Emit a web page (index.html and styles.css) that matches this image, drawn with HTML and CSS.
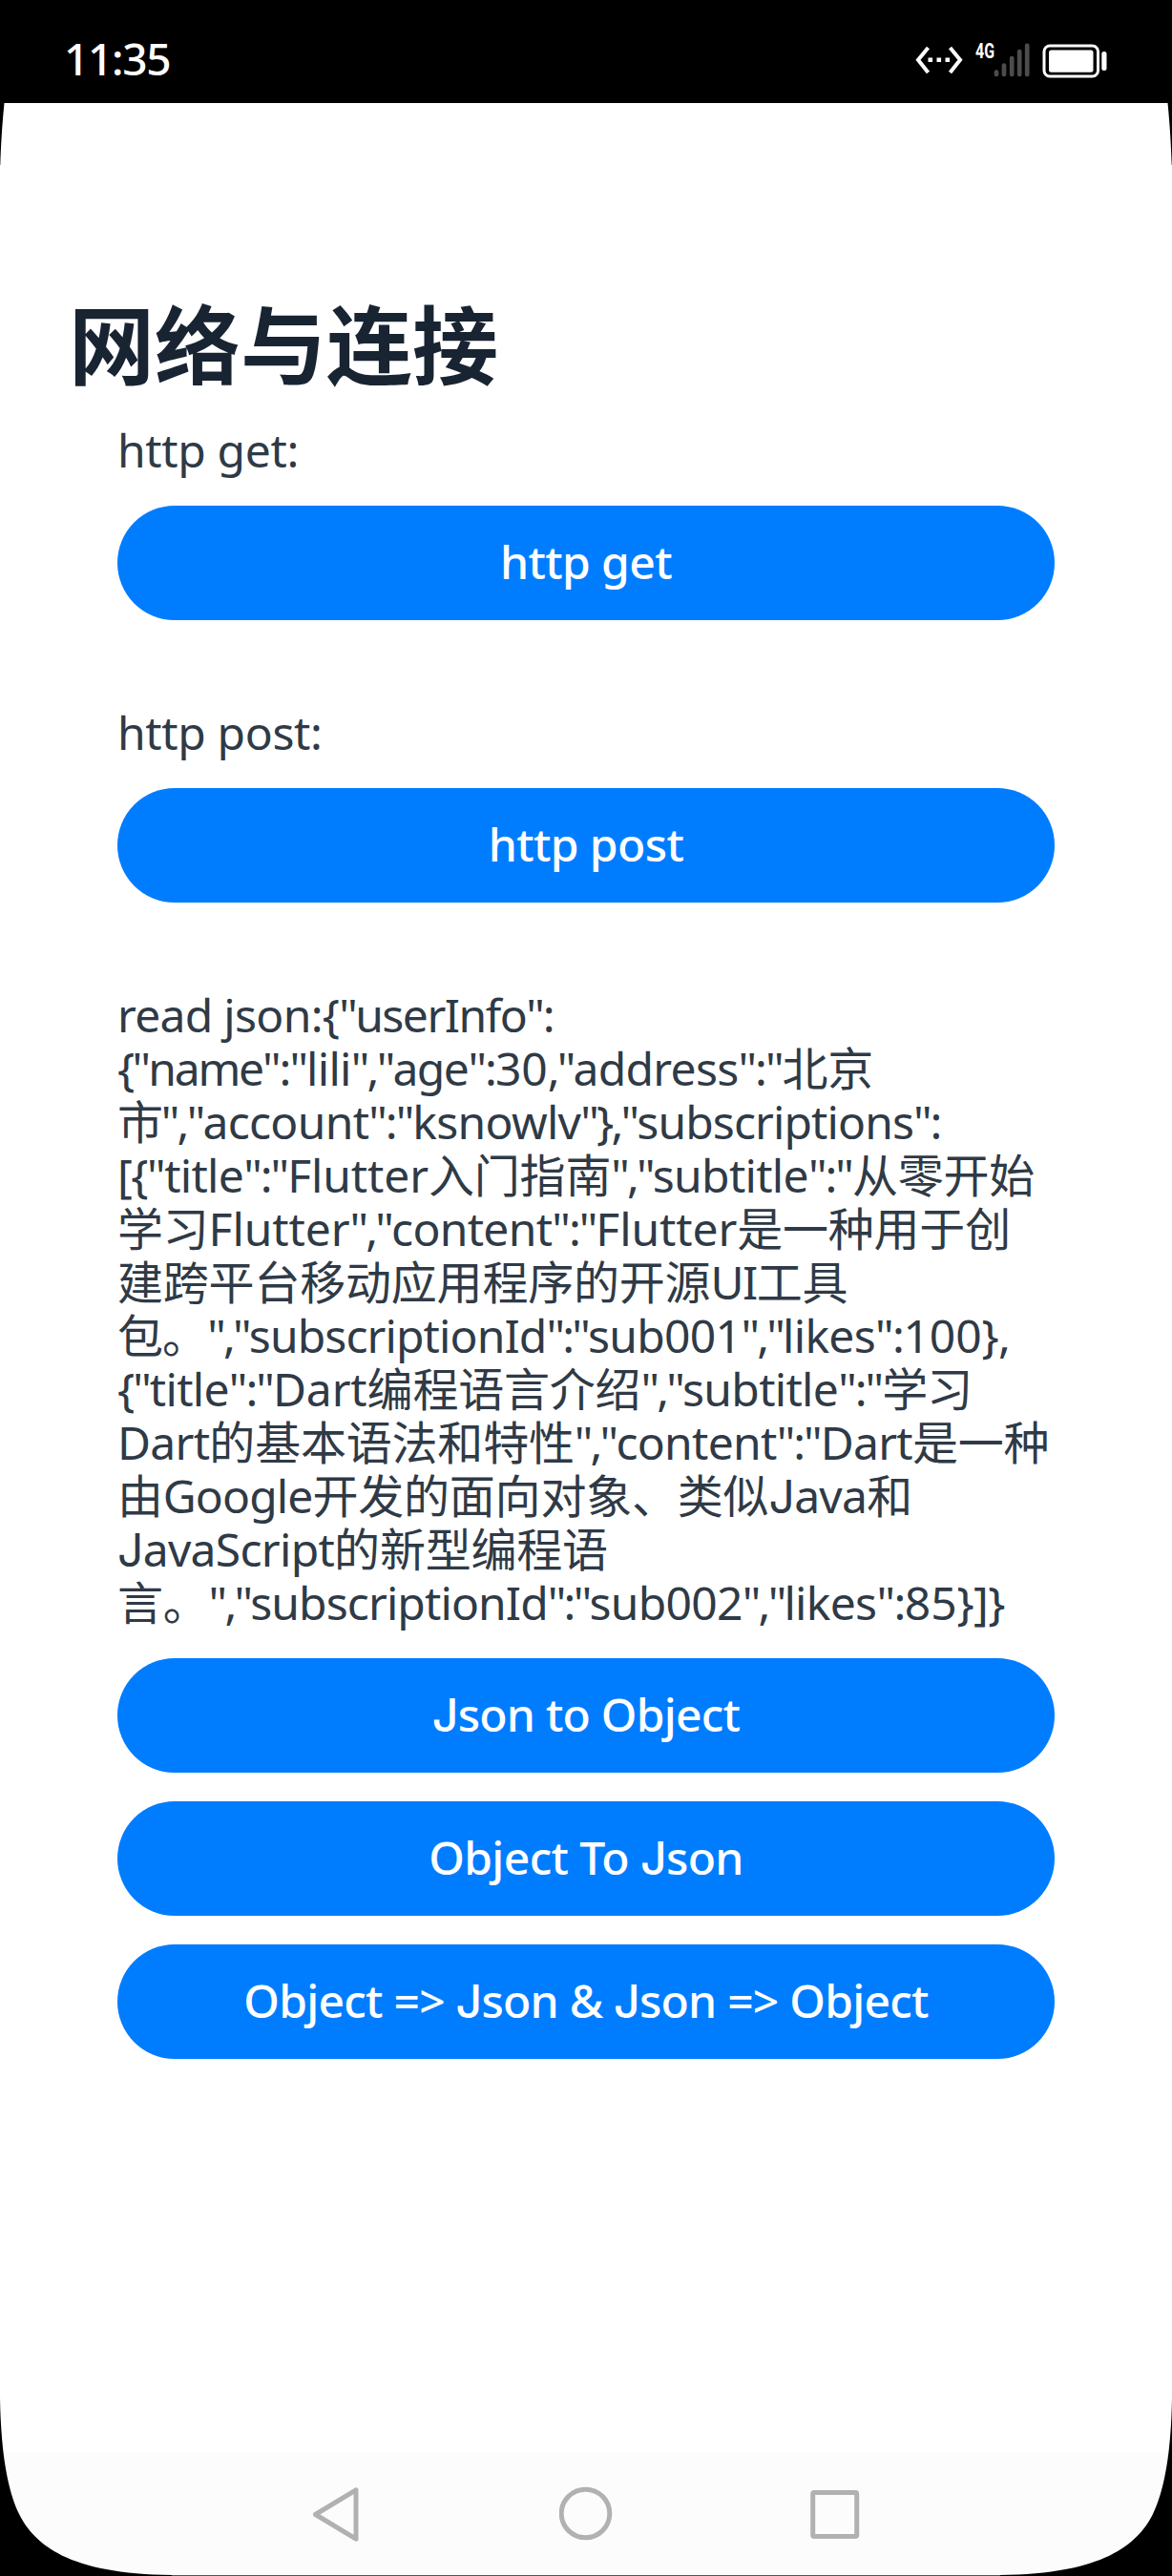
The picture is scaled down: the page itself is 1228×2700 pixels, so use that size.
FILE: index.html
```html
<!DOCTYPE html>
<html lang="zh-CN">
<head>
<meta charset="utf-8">
<title>网络与连接</title>
<link rel="stylesheet" href="styles.css">
</head>
<body>
<div class="screen">
  <header class="status">
    <span class="clock">11:35</span>
    <div class="status-icons">
      <svg width="50" height="40" viewBox="0 0 50 40" fill="none" stroke="#fff" stroke-width="4">
        <path d="M13.500 6 3 18.700 13.500 32M36.500 6 47 18.700 36.500 32"/>
        <path d="M13.500 18.700h23" stroke-dasharray="4.600 4.400" stroke-width="4.500"/>
      </svg>
      <svg class="signal" width="57" height="40" viewBox="0 0 57 40">
        <text class="net" x="0" y="17" textLength="20" lengthAdjust="spacingAndGlyphs">4G</text>
        <path d="M22 31.500v2.500M30 24.500v9.500M38.200 17v17M46.200 10v24M54.200 3.800v30.200" stroke="#4c4c4c" stroke-width="4.700" stroke-linecap="round"/>
      </svg>
      <svg width="68" height="40" viewBox="0 0 68 40" fill="#fff">
        <rect x="2" y="4" width="56.500" height="32" rx="6" fill="none" stroke="#fff" stroke-width="3"/>
        <rect x="7" y="8.500" width="46.500" height="23.200" rx="2.500"/>
        <rect x="62.300" y="10" width="5.200" height="20" rx="2.500"/>
      </svg>
    </div>
  </header>

  <main class="page">
    <h1 class="title">网络与连接</h1>

    <section class="group">
      <p class="label">http get:</p>
      <button class="btn">http get</button>
    </section>

    <section class="group">
      <p class="label">http post:</p>
      <button class="btn">http post</button>
    </section>

    <section class="group">
      <p class="label json">
        <span class="line">read json:{<i class="s">"</i><i class="w">userInfo</i><i class="k">":</i></span>
        <span class="line"><i class="s">{"</i><i class="m">name</i><i class="k">":"</i>lili<i class="s">","</i><i class="w">age</i><i class="k">":</i><i class="n">30</i><i class="s">,"</i>address<i class="k">":"</i><i class="c">北京</i></span>
        <span class="line"><i class="m">市</i><i class="s">","</i>account<i class="k">":"</i>ksnowlv<i class="s">"},"</i><i class="x">subscriptions</i><i class="k">":</i></span>
        <span class="line"><i class="w">[{"</i>title<i class="k">":"</i><i class="n">Flutter</i><i class="c">入门指南</i><i class="s">","</i>subtitle<i class="k">":"</i><i class="c">从零开始</i></span>
        <span class="line"><i class="c">学习</i><i class="n">Flutter</i><i class="s">","</i>content<i class="k">":"</i><i class="n">Flutter</i><i class="c">是一种用于创</i></span>
        <span class="line"><i class="c">建跨平台移动应用程序的开源</i><i class="w">UI</i><i class="c">工具</i></span>
        <span class="line"><i class="x">包。</i><i class="s">","</i><i class="x">subscriptionId</i><i class="s">":"</i>sub001<i class="s">","</i>likes<i class="w">":</i><i class="n">100</i>},</span>
        <span class="line"><i class="k">{"</i>title<i class="k">":"</i><i class="n">Dart</i><i class="c">编程语言介绍</i><i class="s">","</i>subtitle<i class="k">":"</i><i class="x">学习</i></span>
        <span class="line">Dart<i class="c">的基本语法和特性</i><i class="s">","</i>content<i class="k">":"</i>Dart<i class="c">是一种</i></span>
        <span class="line"><i class="c">由</i><i class="x">Google</i><i class="c">开发的面向对象、类似</i><b>J</b>ava<i class="c">和</i></span>
        <span class="line"><b>J</b>avaScript<i class="c">的新型编程语</i></span>
        <span class="line"><i class="c">言。</i><i class="s">","</i><i class="x">subscriptionId</i><i class="s">":"</i>sub002<i class="s">","</i>likes<i class="w">":</i><i class="n">85</i>}]}</span>
      </p>
      <div class="actions">
        <button class="btn long"><span><b>J</b>son to Object</span></button>
        <button class="btn"><span>Object To <b>J</b>son</span></button>
        <button class="btn long"><span>Object =&gt; <b>J</b>son &amp; <b>J</b>son =&gt; Object</span></button>
      </div>
    </section>
  </main>

  <nav class="nav">
    <svg width="56" height="60" viewBox="0 0 56 60"><path d="M5.500 30.500 48 4.800V56.200Z"/></svg>
    <svg width="56" height="60" viewBox="0 0 56 60"><circle cx="27.500" cy="29.500" r="25.300"/></svg>
    <svg width="56" height="60" viewBox="0 0 56 60"><rect x="4.700" y="7.500" width="46" height="46" rx="1.500"/></svg>
  </nav>

  <svg class="corner top left" width="5" height="66" viewBox="0 0 5 66"><path d="M0 0H4.500C2 25 1 45 .3 65H0Z"/></svg>
  <svg class="corner top right" width="5" height="66" viewBox="0 0 5 66"><path d="M0 0H4.500C2 25 1 45 .3 65H0Z"/></svg>
  <svg class="corner bottom left" width="180" height="190" viewBox="0 0 180 190"><path d="M0 3C1 62 8 100 20 125C36 157 72 188 180 189V190H0Z"/></svg>
  <svg class="corner bottom right" width="180" height="190" viewBox="0 0 180 190"><path d="M0 3C1 62 8 100 20 125C36 157 72 188 180 189V190H0Z"/></svg>
</div>
</body>
</html>
```
FILE: styles.css
```css
* { box-sizing: border-box; margin: 0; padding: 0; }

body {
  background: #fff;
  font-family: "Noto Sans", "Noto Sans CJK SC", sans-serif;
}

.screen {
  position: relative;
  display: flex;
  flex-direction: column;
  width: 1228px;
  height: 2700px;
  overflow: hidden;
}

.status {
  display: flex;
  align-items: flex-start;
  justify-content: space-between;
  height: 108px;
  padding: 44px 68px 0 67px;
  background: #000;
  color: #fff;
}

.clock { font-size: 46px; font-weight: 500; line-height: 35px; letter-spacing: -1.3px; }

.status-icons { display: flex; gap: 13px; }

.signal { overflow: visible; }
.net { fill: #fff; font: 700 22px Roboto, sans-serif; }

.page { flex: 1; padding: 196px 123px 0; }

.title {
  margin: 0 0 34px -51px;
  color: #182431;
  font: 700 90px/106px "Noto Sans CJK SC", sans-serif;
}

.group { margin-bottom: 90px; }

.label {
  margin-bottom: 30px;
  color: #2f3a46;
  font-size: 48px;
  line-height: 56px;
  letter-spacing: -0.35px;
}

.json { letter-spacing: -0.7px; }
.line { display: block; height: 56px; white-space: nowrap; }

/* Tracking for the different kinds of runs in the JSON text */
.line i { font-style: normal; }
.s { letter-spacing: -2.8px; }
.k { letter-spacing: -2px; }
.m { letter-spacing: -2.2px; }
.w { letter-spacing: -1.5px; }
.x { letter-spacing: -0.9px; }
.n { letter-spacing: -0.1px; }
.c { letter-spacing: -0.2px; }

b { font-family: Inter, sans-serif; font-weight: inherit; line-height: 1; }

.btn {
  display: block;
  width: 100%;
  height: 120px;
  padding-bottom: 3px;
  border: 0;
  border-radius: 60px;
  background: #007dff;
  color: #fff;
  font: 500 48px/56px "Noto Sans", sans-serif;
  letter-spacing: -0.6px;
}

.btn.long { letter-spacing: -0.75px; }

.actions { display: flex; flex-direction: column; gap: 30px; }

.nav {
  display: grid;
  grid-template-columns: repeat(3, 261px);
  justify-content: center;
  justify-items: center;
  height: 130px;
  padding-top: 35px;
  border-bottom: 1px solid #555;
  background: #fcfcfc;
}

.nav svg { fill: none; stroke: #b1b1b1; stroke-width: 5; stroke-linejoin: round; }

.corner { position: absolute; }
.top { top: 108px; }
.bottom { bottom: 0; }
.left { left: 0; }
.right { right: 0; transform: scaleX(-1); }
```
